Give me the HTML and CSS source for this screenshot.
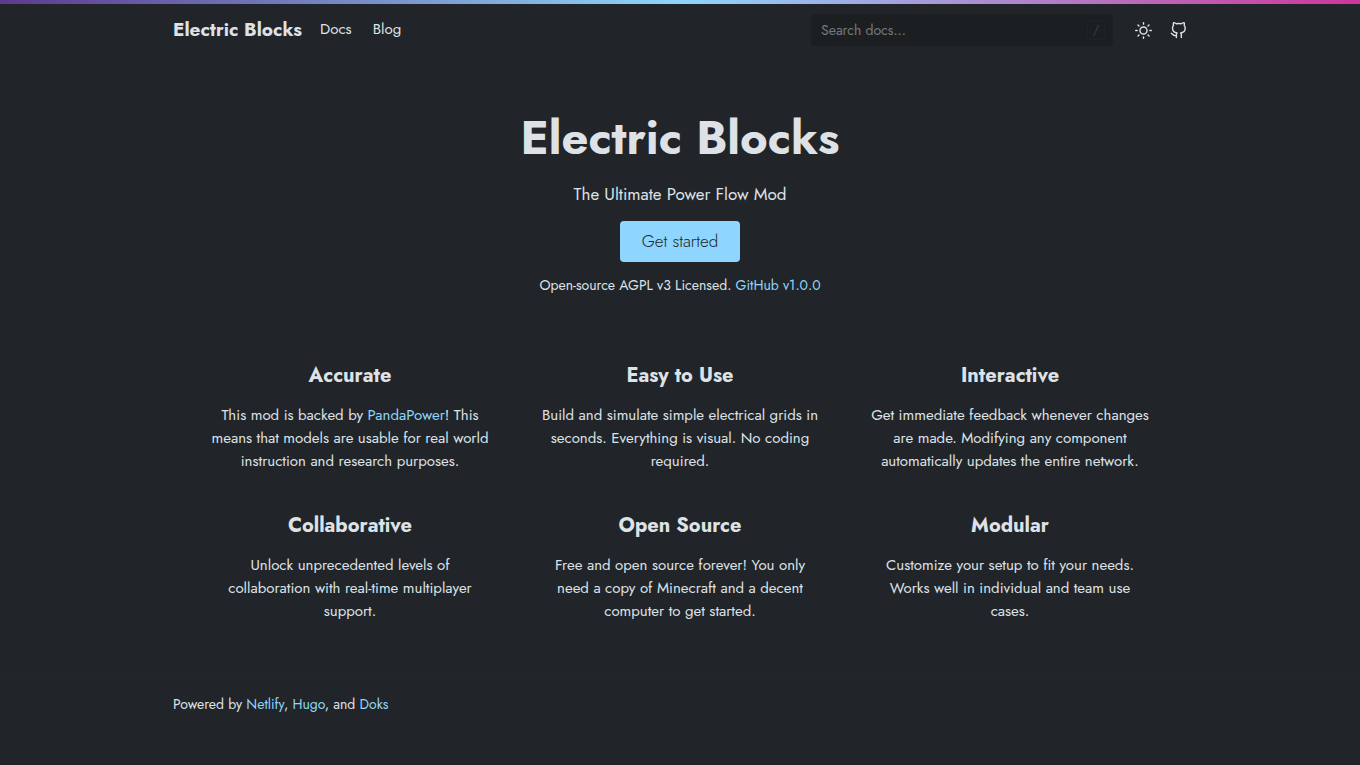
FILE: index.html
```html
<!DOCTYPE html>
<html lang="en">
<head>
<meta charset="utf-8">
<meta name="viewport" content="width=device-width, initial-scale=1">
<title>Electric Blocks</title>
<link rel="stylesheet" href="styles.css">
</head>
<body>
<header class="site-header">
  <div class="container navbar">
    <a class="brand" href="#">Electric Blocks</a>
    <nav class="nav-links" aria-label="Main">
      <a href="#">Docs</a>
      <a href="#">Blog</a>
    </nav>
    <form class="search" role="search">
      <input class="search-input" type="search" placeholder="Search docs..." aria-label="Search docs...">
      <kbd class="search-key">/</kbd>
    </form>
    <div class="actions">
      <button class="icon-button" type="button" aria-label="Toggle theme">
        <svg class="icon" viewBox="0 0 24 24" aria-hidden="true"><circle cx="12" cy="12" r="5"/><path d="M12 1v2M12 21v2M4.22 4.22l1.42 1.42M18.36 18.36l1.42 1.42M1 12h2M21 12h2M4.22 19.78l1.42-1.42M18.36 5.64l1.42-1.42"/></svg>
      </button>
      <a class="icon-button" href="#" aria-label="GitHub">
        <svg class="icon" viewBox="0 0 24 24" aria-hidden="true"><path d="M9 19c-5 1.5-5-2.5-7-3m14 6v-3.87a3.37 3.37 0 0 0-.94-2.61c3.14-.35 6.44-1.54 6.44-7A5.44 5.44 0 0 0 20 4.77 5.07 5.07 0 0 0 19.91 1S18.73.65 16 2.48a13.38 13.38 0 0 0-7 0C6.27.65 5.09 1 5.09 1A5.07 5.07 0 0 0 5 4.77a5.44 5.44 0 0 0-1.5 3.78c0 5.42 3.3 6.61 6.44 7A3.37 3.37 0 0 0 9 18.13V22"/></svg>
      </a>
    </div>
  </div>
</header>
<main>
  <section class="hero container">
    <h1 class="hero-title">Electric Blocks</h1>
    <p class="lead">The Ultimate Power Flow Mod</p>
    <a class="cta" href="#">Get started</a>
    <p class="license">Open-source AGPL v3 Licensed. <a href="#">GitHub v1.0.0</a></p>
  </section>
  <section class="features">
    <article class="feature">
      <h2>Accurate</h2>
      <p>This mod is backed by <a href="#">PandaPower</a>! This means that models are usable for real world instruction and research purposes.</p>
    </article>
    <article class="feature">
      <h2>Easy to Use</h2>
      <p>Build and simulate simple electrical grids in seconds. Everything is visual. No coding required.</p>
    </article>
    <article class="feature">
      <h2>Interactive</h2>
      <p>Get immediate feedback whenever changes are made. Modifying any component automatically updates the entire network.</p>
    </article>
    <article class="feature">
      <h2>Collaborative</h2>
      <p>Unlock unprecedented levels of collaboration with real-time multiplayer support.</p>
    </article>
    <article class="feature">
      <h2>Open Source</h2>
      <p>Free and open source forever! You only need a copy of Minecraft and a decent computer to get started.</p>
    </article>
    <article class="feature">
      <h2>Modular</h2>
      <p>Customize your setup to fit your needs. Works well in individual and team use cases.</p>
    </article>
  </section>
</main>
<footer class="site-footer">
  <p class="container">Powered by <a href="#">Netlify</a>, <a href="#">Hugo</a>, and <a href="#">Doks</a></p>
</footer>
</body>
</html>
```
FILE: styles.css
```css
*, *::before, *::after { box-sizing: border-box; }

body {
  margin: 0;
  background: #212529;
  color: #dee2e6;
  font-family: Jost, Lato, sans-serif;
  font-size: 15px;
  line-height: 23px;
}

h1, h2, p { margin: 0; }

a { color: #8ed6fb; text-decoration: none; }

.container {
  width: 100%;
  max-width: 1062px;
  margin: 0 auto;
  padding: 0 24px;
}

.site-header::before {
  content: "";
  display: block;
  height: 4px;
  background: linear-gradient(90deg, #5d3a8e, #8ed6fb 50%, #cf359c);
}

.navbar {
  display: flex;
  align-items: center;
  height: 52px;
}

.brand {
  padding-bottom: 2px;
  color: #dee2e6;
  font-size: 19px;
  font-weight: 700;
}

.nav-links {
  display: flex;
  gap: 21px;
  margin-left: 18px;
  padding-bottom: 2px;
}

.nav-links a { color: #dee2e6; }

.search {
  position: relative;
  width: 302px;
  margin-left: auto;
}

.search-input {
  display: block;
  width: 100%;
  height: 32px;
  padding: 0 40px 0 10px;
  border: 0;
  border-radius: 4px;
  background: #1b1f22;
  color: #dee2e6;
  font: inherit;
  font-size: 14px;
}

.search-input::placeholder { color: #75797d; opacity: 1; }

.search-key {
  position: absolute;
  top: 6px;
  right: 8px;
  width: 18px;
  height: 20px;
  border: 1px solid #202428;
  border-radius: 4px;
  color: #3b4044;
  font: inherit;
  font-size: 12px;
  line-height: 18px;
  text-align: center;
}

.actions {
  display: flex;
  gap: 18px;
  margin-left: 22px;
}

.icon-button {
  display: flex;
  padding: 0;
  border: 0;
  background: none;
  color: #dee2e6;
}

.icon {
  width: 17px;
  height: 17px;
  fill: none;
  stroke: currentColor;
  stroke-width: 2;
  stroke-linecap: round;
  stroke-linejoin: round;
}

.hero {
  display: flex;
  flex-direction: column;
  align-items: center;
  padding-top: 53px;
  text-align: center;
}

.hero-title {
  font-size: 47px;
  font-weight: 700;
  line-height: 58px;
}

.lead {
  margin-top: 13px;
  font-size: 17px;
  line-height: 28px;
}

.cta {
  margin-top: 13px;
  padding: 8px 22px;
  border-radius: 4px;
  background: #8ed6ff;
  color: #212529;
  font-size: 17px;
  font-weight: 300;
  line-height: 25px;
}

.license {
  margin-top: 12px;
  font-size: 14px;
}

.features {
  display: grid;
  grid-template-columns: repeat(3, 1fr);
  gap: 39px 50px;
  max-width: 980px;
  margin: 65px auto 0;
  padding: 0 20px;
  text-align: center;
}

.feature h2 {
  margin-bottom: 14px;
  font-size: 20px;
  font-weight: 700;
  line-height: 28px;
}

.site-footer {
  margin-top: 53px;
  padding: 16px 0 48px;
  border-top: 1px solid #24282c;
  font-size: 14px;
}
```
